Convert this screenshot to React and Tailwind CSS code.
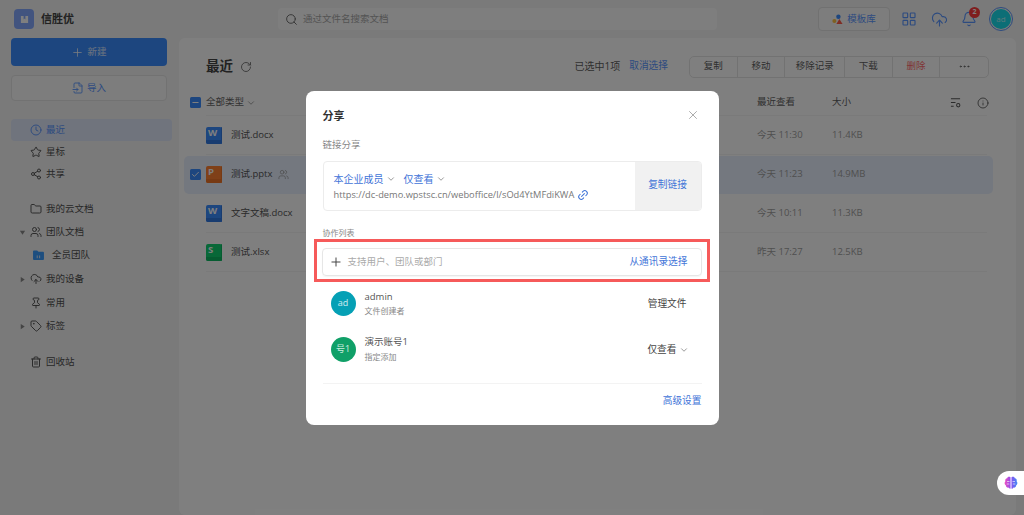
import React from "react";
import {
  Plus, FileInput, Clock, Star, Share2, Folder, Users, CloudUpload, Pin, Tag, Trash2,
  RotateCw, LayoutGrid, Bell, Search, X, Link2, Info, ChevronDown, Check, Minus, Ellipsis,
} from "lucide-react";

const font = { fontFamily: '"Open Sans","Noto Sans CJK SC",sans-serif' };

function Caret({ open }) {
  return (
    <svg viewBox="0 0 8 8" className={"w-[7px] h-[7px] " + (open ? "rotate-90" : "")}>
      <path d="M2 1 L6.5 4 L2 7 Z" fill="#888" />
    </svg>
  );
}

function NavItem({ icon: Icon, label, active, caret }) {
  return (
    <div className={"flex items-center h-[22px] rounded-[4px] " + (active ? "bg-[#e0e8fa] text-[#5a96ff]" : "text-[#505050]")}>
      <span className="w-[19px] flex justify-center pl-[3px]">{caret}</span>
      <span className="w-[12px] flex justify-center mr-[4px]">
        <Icon size={12} strokeWidth={1.9} />
      </span>
      <span className="text-[9.5px]">{label}</span>
    </div>
  );
}

function TeamFolder() {
  return (
    <svg viewBox="0 0 12 11" className="w-[11px] h-[10px]">
      <path d="M0 1.5 Q0 .5 1 .5 H4.5 L6 2 H11 Q12 2 12 3 V10 Q12 11 11 11 H1 Q0 11 0 10 Z" fill="#3a9cff" />
      <rect x="4" y="6" width="1.2" height="3" fill="#cfe2f8" />
      <rect x="6.6" y="6" width="1.2" height="3" fill="#cfe2f8" />
    </svg>
  );
}

function FileIcon({ letter, color, dark }) {
  return (
    <div className="w-[16px] h-[17px] rounded-[2px] relative flex items-start pl-[2px] shrink-0" style={{ background: color }}>
      <span className="text-white font-bold text-[9.5px] leading-[12px]">{letter}</span>
      <div className="absolute right-0 top-0 bottom-0 w-[1px] rounded-r-[2px]" style={{ background: dark }} />
      <div className="absolute left-0 right-0 bottom-0 h-[4px] rounded-b-[2px]" style={{ background: dark }} />
    </div>
  );
}

function Row({ letter, color, dark, name, time, size, selected, shared }) {
  return (
    <div className="relative flex items-center h-[39px]">
      {selected ? (
        <div className="flex items-center h-[38px] w-full rounded-[5px] bg-[#e8f0ff] pl-[6px]">
          <span className="w-[11px] h-[11px] rounded-[1.5px] bg-[#3a8cff] flex items-center justify-center mr-[5px]">
            <Check size={9} color="white" strokeWidth={2.5} />
          </span>
          <FileIcon letter={letter} color={color} dark={dark} />
          <span className="ml-[9px] text-[9.5px] text-[#555]">{name}</span>
          {shared && <Users size={11} className="ml-[6px] text-[#999]" strokeWidth={1.6} />}
          <span className="absolute left-[573px] text-[9.5px] text-[#a0a0a0]">{time}</span>
          <span className="absolute left-[648px] text-[9.5px] text-[#a0a0a0]">{size}</span>
        </div>
      ) : (
        <div className="flex items-center h-[39px] w-full pl-[22px]">
          <FileIcon letter={letter} color={color} dark={dark} />
          <span className="ml-[9px] text-[9.5px] text-[#555]">{name}</span>
          <span className="absolute left-[573px] text-[9.5px] text-[#a0a0a0]">{time}</span>
          <span className="absolute left-[648px] text-[9.5px] text-[#a0a0a0]">{size}</span>
          <div className="absolute left-[22px] right-[6px] bottom-0 h-px bg-[#f4f4f4]" />
        </div>
      )}
    </div>
  );
}

function ToolCell({ label, w, red, last }) {
  return (
    <div
      className={"flex items-center justify-center text-[9.5px] h-full " + (red ? "text-[#ff6a6a] " : "text-[#606060] ") + (last ? "" : "border-r border-[#e5e5e5]")}
      style={{ width: w }}
    >
      {label}
    </div>
  );
}

function Brain() {
  return (
    <svg viewBox="0 0 14 14" className="w-[14px] h-[14px]">
      <defs>
        <linearGradient id="bg" x1="0" y1="0" x2="1" y2="0">
          <stop offset="0" stopColor="#f04fc0" />
          <stop offset=".5" stopColor="#8a4cf0" />
          <stop offset="1" stopColor="#3f8cf5" />
        </linearGradient>
      </defs>
      <path d="M6.5 1.2 C5 .4 3.6 .8 3.2 2.2 C1.6 2.4 .8 3.8 1.4 5.2 C.2 6.4 .4 8.4 1.8 9.2 C1.8 11 3.4 12 4.6 11.6 C5.2 13 6.2 13 6.5 12.4 Z M7.5 1.2 C9 .4 10.4 .8 10.8 2.2 C12.4 2.4 13.2 3.8 12.6 5.2 C13.8 6.4 13.6 8.4 12.2 9.2 C12.2 11 10.6 12 9.4 11.6 C8.8 13 7.8 13 7.5 12.4 Z" fill="url(#bg)" />
      <path d="M3 5.5h2.5M2.8 8h2.5M8.5 5.5h2.5M8.8 8h2.5" stroke="#fff" strokeWidth=".6" />
    </svg>
  );
}

export default function App() {
  return (
    <div className="relative w-[1024px] h-[515px] overflow-hidden bg-[#f4f4f4]" style={font}>
      {/* top bar */}
      <header className="flex items-center h-[38px] relative">
        <div className="w-[20px] h-[20px] ml-[14px] rounded-[4px] bg-[#84a8ff] flex items-center justify-center">
          <svg viewBox="0 0 10 10" className="w-[9px] h-[9px]">
            <path d="M1 1 H4 V5 L5 4 L6 5 V1 H9 V9 H1 Z" fill="#fff" />
          </svg>
        </div>
        <span className="ml-[7px] text-[11px] font-bold text-[#444]">信胜优</span>
        <div className="ml-[204px] w-[439px] h-[22px] rounded-[4px] bg-[#fcfcfc] flex items-center pl-[7px]">
          <Search size={13} className="text-[#666]" strokeWidth={1.7} />
          <span className="ml-[5px] text-[9.5px] text-[#a8a8a8]">通过文件名搜索文档</span>
        </div>
        <div className="ml-[101px] w-[72px] h-[24px] rounded-[4px] bg-[#fafafa] border border-[#e2e2e2] flex items-center justify-center gap-[4px]">
          <svg viewBox="0 0 12 12" className="w-[11px] h-[11px]">
            <circle cx="7" cy="3" r="2.4" fill="#3a8cff" />
            <circle cx="2.6" cy="7.6" r="2.2" fill="#ffc040" />
            <path d="M8 5.5 L11.5 11 H4.8 Z" fill="#ff5a48" />
          </svg>
          <span className="text-[9.5px] text-[#5a96ff]">模板库</span>
        </div>
        <LayoutGrid size={16} strokeWidth={1.7} className="ml-[11px] text-[#5a96ff]" />
        <CloudUpload size={17} strokeWidth={1.6} className="ml-[14px] text-[#5a96ff]" />
        <div className="relative ml-[13px]">
          <Bell size={16} strokeWidth={1.7} className="text-[#5a96ff]" />
          <span className="absolute -top-[4px] left-[8px] w-[11px] h-[11px] rounded-full bg-[#ff3c3c] text-white text-[7px] font-bold flex items-center justify-center">2</span>
        </div>
        <div className="ml-[12px] w-[24px] h-[24px] rounded-full border border-[#5a96ff] p-[1px]">
          <div className="w-full h-full rounded-full bg-[#18dcec] text-white/70 text-[8px] flex items-center justify-center">ad</div>
        </div>
      </header>

      <div className="flex">
        {/* sidebar */}
        <aside className="w-[179px] shrink-0">
          <div className="mx-[11px] w-[156px] h-[28px] rounded-[4px] bg-[#3a8cff] text-white/80 flex items-center justify-center gap-[3px] text-[9.5px]">
            <Plus size={13} strokeWidth={1.7} />
            新建
          </div>
          <div className="mt-[9px] mx-[11px] w-[156px] h-[26px] rounded-[4px] bg-[#fbfbfb] border border-[#e4e4e4] text-[#5a96ff] flex items-center justify-center gap-[3px] text-[9.5px]">
            <FileInput size={12} strokeWidth={1.8} />
            导入
          </div>
          <nav className="mt-[18px] ml-[11px] w-[161px]">
            <NavItem icon={Clock} label="最近" active />
            <NavItem icon={Star} label="星标" />
            <NavItem icon={Share2} label="共享" />
            <div className="h-[13px]" />
            <NavItem icon={Folder} label="我的云文档" />
            <div className="mt-px"><NavItem icon={Users} label="团队文档" caret={<Caret open />} /></div>
            <div className="flex items-center h-[24px] pl-[22px] text-[9.5px] text-[#505050]">
              <TeamFolder />
              <span className="ml-[8px]">全员团队</span>
            </div>
            <div className="mt-px"><NavItem icon={CloudUpload} label="我的设备" caret={<Caret />} /></div>
            <div className="mt-[2px]"><NavItem icon={Pin} label="常用" /></div>
            <div className="mt-px"><NavItem icon={Tag} label="标签" caret={<Caret />} /></div>
            <div className="h-[14px]" />
            <NavItem icon={Trash2} label="回收站" />
          </nav>
        </aside>

        {/* main panel */}
        <main className="relative w-[837px] h-[477px] rounded-[6px] bg-white pl-[5px] pr-[23px]">
          <div className="flex items-center h-[39px] mt-[9px] pl-[22px] relative">
            <span className="text-[13.5px] font-bold text-[#444]">最近</span>
            <RotateCw size={12} strokeWidth={1.9} className="ml-[7px] text-[#777]" />
            <span className="ml-auto text-[10px] text-[#606060]">已选中1项</span>
            <span className="ml-[9px] text-[9.7px] text-[#5a96ff] mr-[21px]">取消选择</span>
            <div className="flex h-[22px] w-[300px] rounded-[5px] border border-[#e5e5e5] mr-[4px]">
              <ToolCell label="复制" w={48} />
              <ToolCell label="移动" w={48} />
              <ToolCell label="移除记录" w={60} />
              <ToolCell label="下载" w={48} />
              <ToolCell label="删除" w={48} red />
              <ToolCell label={<Ellipsis size={13} strokeWidth={1.6} />} w={48} last />
            </div>
          </div>
          <div className="relative flex items-center h-[26px] mt-[4px] pl-[6px] pb-[1px]">
            <span className="w-[11px] h-[11px] rounded-[1.5px] bg-[#3a8cff] flex items-center justify-center mr-[5px]">
              <Minus size={9} color="white" strokeWidth={3} />
            </span>
            <span className="text-[9.5px] text-[#666]">全部类型</span>
            <ChevronDown size={10} strokeWidth={1.6} className="ml-[2px] text-[#777]" />
            <span className="absolute left-[573px] text-[9.5px] text-[#606060]">最近查看</span>
            <span className="absolute left-[648px] text-[9.5px] text-[#606060]">大小</span>
            <svg viewBox="0 0 12 12" className="absolute left-[766px] w-[11px] h-[11px] text-[#555]" fill="none" stroke="currentColor" strokeWidth="1.1">
              <path d="M1 2h10M1 6h5M1 10h3" />
              <circle cx="9" cy="9" r="1.8" />
            </svg>
            <Info size={12} strokeWidth={1.7} className="absolute left-[793px] text-[#555]" />
            <div className="absolute left-[22px] right-[6px] bottom-0 h-px bg-[#f4f4f4]" />
          </div>
          <Row letter="W" color="#3a8cff" dark="#3078e0" name="测试.docx" time="今天 11:30" size="11.4KB" />
          <Row letter="P" color="#ff8030" dark="#ee7428" name="测试.pptx" time="今天 11:23" size="14.9MB" selected shared />
          <Row letter="W" color="#3a8cff" dark="#3078e0" name="文字文稿.docx" time="今天 10:11" size="11.3KB" />
          <Row letter="S" color="#10d070" dark="#0cb862" name="测试.xlsx" time="昨天 17:27" size="12.5KB" />
        </main>
      </div>

      {/* modal mask */}
      <div className="absolute inset-0 bg-black/50 flex items-center justify-center">
        <div className="relative w-[413px] h-[334px] rounded-[8px] bg-white px-[17px] pt-[17px]">
          <div className="flex items-center justify-between h-[18px]">
            <span className="text-[11px] font-bold text-[#333]">分享</span>
            <X size={14} strokeWidth={1.2} className="text-[#888] mr-[2px] -mt-[3px]" />
          </div>
          <div className="mt-[12px] text-[9.5px] text-[#888] leading-[14px]">链接分享</div>
          <div className="mt-[9px] flex h-[50px] rounded-[4px] border border-[#ececec] overflow-hidden">
            <div className="flex-1 pl-[10px] pt-[9px]">
              <div className="flex items-center text-[10px] leading-[16px] text-[#3f74d8]">
                <span>本企业成员</span>
                <ChevronDown size={10} strokeWidth={1.6} className="ml-[2px] text-[#666]" />
                <span className="ml-[8px]">仅查看</span>
                <ChevronDown size={10} strokeWidth={1.6} className="ml-[2px] text-[#666]" />
              </div>
              <div className="flex items-center text-[9.27px] leading-[14px] mt-px text-[#777]">
                <span>https://dc-demo.wpstsc.cn/weboffice/l/sOd4YtMFdiKWA</span>
                <Link2 size={12} strokeWidth={2} className="ml-[3px] text-[#3f74d8] -rotate-45" />
              </div>
            </div>
            <div className="w-[66px] bg-[#f1f1f1] flex items-center justify-center text-[9.7px] text-[#3f74d8]">复制链接</div>
          </div>
          <div className="mt-[16px] text-[8px] text-[#888] leading-[12px]">协作列表</div>
          <div className="mt-[9px] flex items-center h-[28px] rounded-[4px] border border-[#e6e6e6] pl-[6px] pr-[13px] -ml-px shadow-[0_1px_1px_rgba(0,0,0,0.04)]">
            <Plus size={14} strokeWidth={1.7} className="text-[#444]" />
            <span className="ml-[5px] text-[9.5px] text-[#aaa] pt-[1px]">支持用户、团队或部门</span>
            <span className="ml-auto text-[9.7px] text-[#3f74d8] pt-[1px]">从通讯录选择</span>
          </div>
          <div className="mt-[15px] flex items-center h-[25px] pl-[8px]">
            <div className="w-[25px] h-[25px] rounded-full bg-[#05a0b5] text-white/80 text-[9px] flex items-center justify-center">ad</div>
            <div className="ml-[9px]">
              <div className="text-[9.5px] leading-[14px] text-[#555]">admin</div>
              <div className="text-[8px] leading-[12px] mt-px text-[#888]">文件创建者</div>
            </div>
            <span className="ml-auto mr-[15px] text-[9.7px] text-[#444] pt-[2px]">管理文件</span>
          </div>
          <div className="mt-[21px] flex items-center h-[25px] pl-[8px]">
            <div className="w-[25px] h-[25px] rounded-full bg-[#10a068] text-white/80 text-[9px] flex items-center justify-center">号1</div>
            <div className="ml-[9px]">
              <div className="text-[9.5px] leading-[14px] text-[#555]">演示账号1</div>
              <div className="text-[8px] leading-[12px] mt-[2px] text-[#888]">指定添加</div>
            </div>
            <span className="ml-auto text-[9.7px] text-[#444] pt-[3px]">仅查看</span>
            <ChevronDown size={10} strokeWidth={1.6} className="ml-[2px] mr-[13px] mt-[2px] text-[#666]" />
          </div>
          <div className="mt-[21px] h-px bg-[#f3f3f3]" />
          <div className="mt-[10px] text-right text-[9.7px] leading-[14px] text-[#3f74d8]">高级设置</div>
        </div>
      </div>

      {/* annotation */}
      <div className="absolute left-[314px] top-[239px] w-[396px] h-[43px] border-[3px] border-[#f65a5a]" />

      {/* floating assistant */}
      <div className="absolute right-0 top-[471px] w-[27px] h-[24px] rounded-l-full bg-white flex items-center justify-center pl-[1px]">
        <Brain />
      </div>
    </div>
  );
}
